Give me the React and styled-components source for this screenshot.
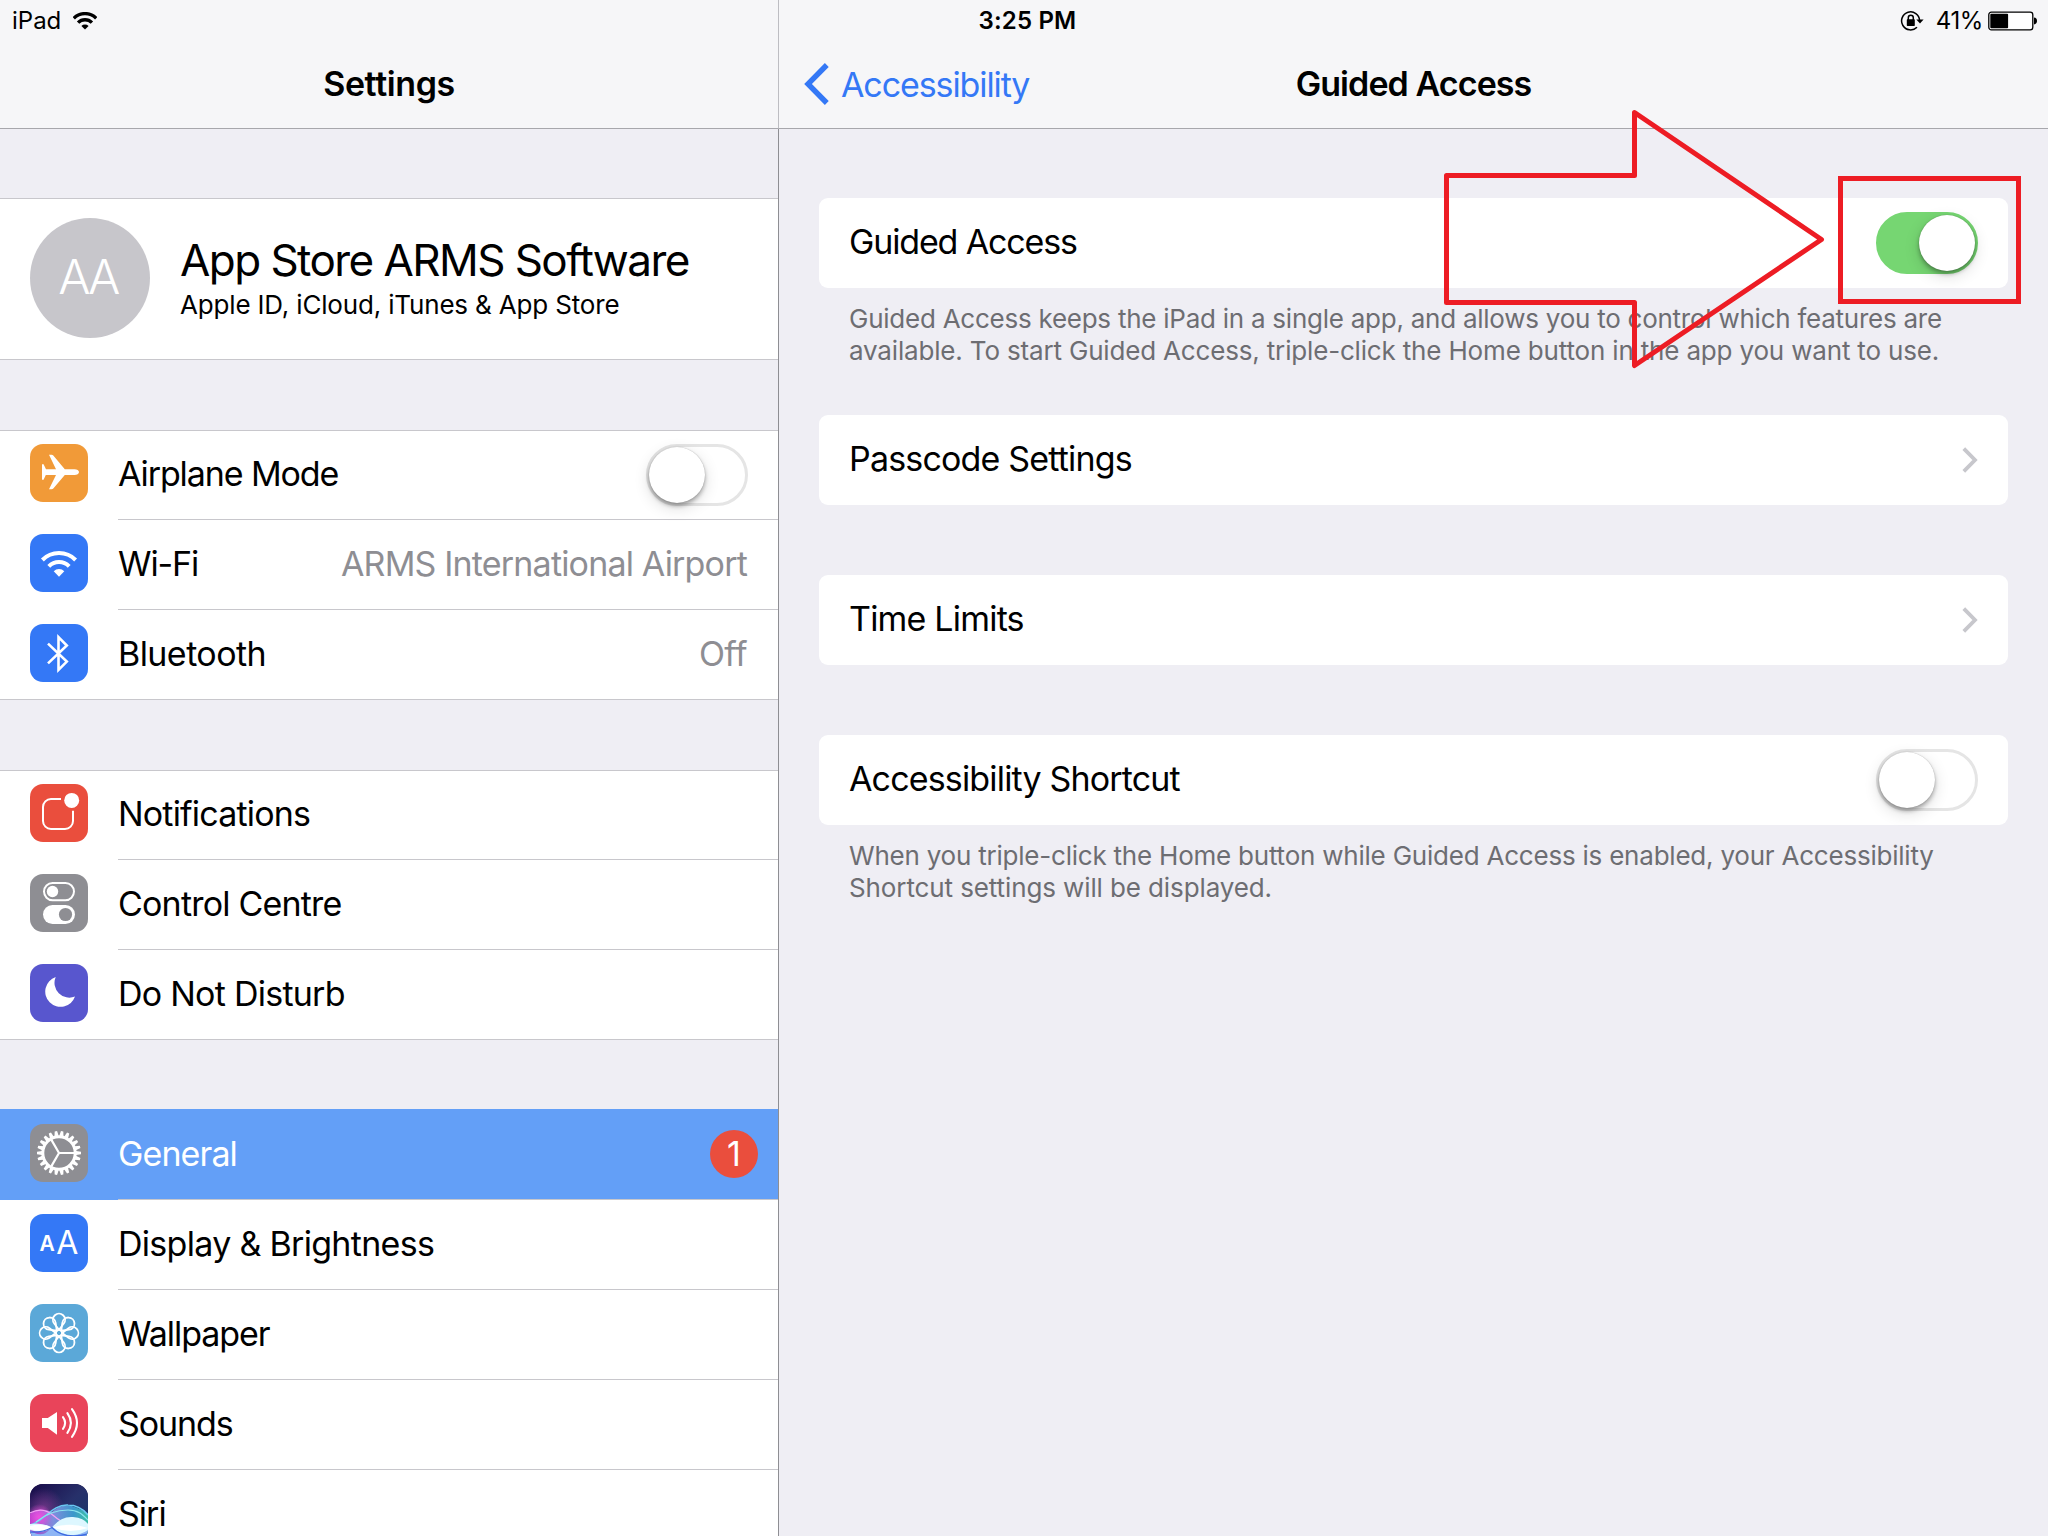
import React from 'react';
import styled, { createGlobalStyle } from 'styled-components';

const GlobalStyle = createGlobalStyle `
body {
margin: 0;
background: #EFEEF4;
font-family: Inter, "Liberation Sans", sans-serif;
color: #000;
}
`
const Screen = styled.div `
position: relative;
display: flex;
width: 2048px;
height: 1536px;
overflow: hidden;
background: #EFEEF4;
`
const StatusBar = styled.div `
position: absolute;
top: 0;
left: 0;
right: 0;
display: grid;
grid-template-columns: 1fr auto 1fr;
align-items: center;
height: 41px;
padding: 0 11px 0 12px;
font-size: 24px;
line-height: 41px;
`
const StatusLeft = styled.div `
display: flex;
align-items: center;
gap: 12px;
`
const Clock = styled.div `
margin-left: 6px;
font-weight: 600;
letter-spacing: 0.17px;
`
const StatusRight = styled.div `
display: flex;
align-items: center;
justify-content: flex-end;
`
const Percent = styled.span `
margin: 0 5px 0 12px;
letter-spacing: -0.4px;
`
const Sidebar = styled.div `
display: flex;
flex-direction: column;
flex-shrink: 0;
width: 778px;
border-right: 1px solid #8E8E93;
`
const Detail = styled.div `
flex: 1;
`
const NavBar = styled.div `
display: grid;
grid-template-columns: 1fr auto 1fr;
align-items: center;
flex-shrink: 0;
height: 88px;
padding-top: 40px;
background: #F6F6F8;
border-bottom: 1px solid #A7A7AC;
`
const SideNav = styled(NavBar) `
margin-right: -1px;
border-right: 1px solid #BDBDC2;
`
const Title = styled.div `
grid-column: 2;
padding-bottom: 1px;
font-size: 34px;
font-weight: 600;
letter-spacing: ${(p) => p.$track}px;
`
const Back = styled.div `
display: flex;
align-items: center;
gap: 12px;
padding-left: 25px;
font-size: 34px;
letter-spacing: -1.1px;
color: #3478F6;
`
const SideList = styled.div `
display: flex;
flex-direction: column;
gap: 70px;
padding-top: 69px;
`
const Group = styled.div `
flex-shrink: 0;
background: #FFF;
border-top: 1px solid #C8C7CC;
border-bottom: 1px solid #C8C7CC;
`
const Profile = styled(Group) `
display: flex;
gap: 30px;
height: 141px;
padding: 19px 30px 0;
`
const Avatar = styled.div `
width: 120px;
height: 120px;
border-radius: 50%;
background: #C7C6CB;
color: #FFF;
font-size: 48px;
font-weight: 300;
line-height: 118px;
text-align: center;
text-indent: -5px;
letter-spacing: -3.4px;
`
const ProfileName = styled.div `
margin-top: 17px;
font-size: 44px;
line-height: 50px;
letter-spacing: -1.56px;
`
const ProfileInfo = styled.div `
font-size: 26px;
line-height: 39px;
letter-spacing: -0.17px;
`
const Row = styled.div `
display: flex;
height: 90px;
padding-left: 30px;
color: ${(p) => (p.$selected ? '#FFF' : '#000')};
background: ${(p) => (p.$selected ? '#639FF7' : 'none')};
box-shadow: ${(p) => (p.$selected ? '0 -1px 0 #639FF7' : 'none')};

&:first-child {
margin-top: -1px;
}
&:last-child {
height: 89px;
}
`
const RowBody = styled.div `
display: flex;
justify-content: space-between;
flex: 1;
margin-left: 30px;
padding-right: ${(p) => (p.$badge ? 20 : 30)}px;
border-bottom: 1px solid #C8C7CC;
font-size: 34px;
line-height: 88px;

${Row}:last-child & {
border-bottom: 0;
}
`
const Label = styled.span `
letter-spacing: ${(p) => p.$track}px;
`
const Value = styled.span `
margin-right: 1px;
color: #8E8E93;
letter-spacing: ${(p) => p.$track}px;
`
const Tile = styled.svg `
width: 58px;
height: 58px;
margin-top: 14px;
border-radius: 13px;
background: ${(p) => p.$color};
`
const Badge = styled.div `
width: 48px;
height: 48px;
margin-top: 20px;
border-radius: 50%;
background: #EA4E3D;
line-height: 47px;
text-align: center;
`
const Track = styled.div `
box-sizing: border-box;
display: flex;
justify-content: ${(p) => (p.$on ? 'flex-end' : 'flex-start')};
width: 102px;
height: 62px;
margin-top: 14px;
border: 3px solid ${(p) => (p.$on ? '#76D672' : '#E5E5E5')};
border-radius: 31px;
background: ${(p) => (p.$on ? '#76D672' : '#FFF')};
`
const Knob = styled.div `
width: 56px;
height: 56px;
border-radius: 50%;
background: #FFF;
box-shadow: 0 5px 16px rgba(0, 0, 0, 0.14), 0 3px 4px rgba(0, 0, 0, 0.3), 0 0 1px rgba(0, 0, 0, 0.3);
`
const Cards = styled.div `
display: flex;
flex-direction: column;
padding: 69px 40px 0;
`
const Card = styled.div `
display: flex;
justify-content: space-between;
height: 90px;
margin-bottom: ${(p) => (p.$note ? 0 : 70)}px;
padding: 0 30px;
border-radius: 9px;
background: #FFF;
font-size: 34px;
line-height: 88px;
`
const Chevron = styled.svg `
width: 16px;
height: 26px;
margin-top: 32px;
`
const Footnote = styled.div `
padding: 15px 30px 48px;
font-size: 26px;
line-height: 32px;
color: #6D6D72;
white-space: nowrap;
`
const NoteLine = styled.div `
letter-spacing: ${(p) => p.$track}px;
`
const Marker = styled.svg `
position: absolute;
top: 100px;
left: 1430px;
width: 600px;
height: 280px;
`

const Switch = ({ on }) => <Track $on={on}><Knob /></Track>

const WifiMark = ({ weight = 4 }) => (
    <g fill="none" stroke="currentColor" strokeWidth={weight}>
        <path d="M12.4 26A23.4 23.4 0 0 1 45.6 26" />
        <path d="M18.8 32.4A14.3 14.3 0 0 1 39.2 32.4" />
        <path d="M29 42.7L23.7 37.2A7.5 7.5 0 0 1 34.3 37.2Z" fill="currentColor" stroke="none" />
    </g>
)

const teeth = Array.from({ length: 22 }, (_, i) => (i * 360) / 22);
const petals = [0, 45, 90, 135, 180, 225, 270, 315];

const icons = {
    airplane: ['#F19A38', (
        <path fill="#FFF" d="M49 28C49 29.8 47 31 44.5 31H34.8L23.3 44.6Q22.6 45.3 21.6 45.3H19L26 31H15.8L13.6 35.8H12V20.3H13.6L16 25.2H26L19 10.8H21.6Q22.6 10.8 23.3 11.6L34.8 25.2H44.5C47 25.2 49 26.3 49 28Z" />
    )],
    wifi: ['#3478F6', <WifiMark />],
    bluetooth: ['#3478F6', (
        <path fill="none" stroke="#FFF" strokeWidth="2.6" d="M18 19.6L36.8 37.6L28.5 45.8V13.2L36.8 21.5L18 39.4" />
    )],
    notifications: ['#EA4E3D', (
        <>
            <path fill="none" stroke="#FFF" strokeWidth="2" d="M31 15H21a8 8 0 0 0-8 8V37a8 8 0 0 0 8 8H35a8 8 0 0 0 8-8V26.8" />
            <circle cx="41.7" cy="16.4" r="7.5" fill="#FFF" />
        </>
    )],
    control: ['#8E8E93', (
        <>
            <rect x="14" y="9" width="30" height="17.2" rx="8.6" fill="none" stroke="#FFF" strokeWidth="2" />
            <circle cx="22.5" cy="17.5" r="5.7" fill="#FFF" />
            <rect x="13" y="31" width="32" height="19" rx="9.5" fill="#FFF" />
            <circle cx="35.5" cy="40.5" r="6.6" fill="#8E8E93" />
        </>
    )],
    moon: ['#5856CE', (
        <path fill="#FFF" d="M25.7 13A15.3 15.3 0 1 0 45 32.5A14.8 14.8 0 0 1 25.7 13Z" />
    )],
    gear: ['#8E8E93', (
        <g stroke="#FFF" fill="none">
            <circle cx="29" cy="29" r="16.2" strokeWidth="3" />
            {teeth.map((a) => (
                <path key={a} fill="#FFF" stroke="none" d="M46 26.9L51 27.8V30.2L46 31.1Z" transform={`rotate(${a} 29 29)`} />
            ))}
            <path strokeWidth="2.2" d="M29 29H45M29 29L21 15.1M29 29L21 42.9" />
        </g>
    )],
    display: ['#3478F6', (
        <g fill="#FFF" textAnchor="middle">
            <text x="17.2" y="37.3" fontSize="21" fontWeight="600">A</text>
            <text x="37.4" y="40" fontSize="32">A</text>
        </g>
    )],
    wallpaper: ['#5BA8D8', (
        <g stroke="#FFF" strokeWidth="1.8" fill="none">
            {petals.map((a) => (
                <path key={a} d="M29 25.8L24.2 19.5A6.1 6.1 0 1 1 33.8 19.5Z" transform={`rotate(${a} 29 29)`} />
            ))}
            <circle cx="29" cy="29" r="3.1" />
        </g>
    )],
    sounds: ['#E9445A', (
        <>
            <path fill="#FFF" d="M12 24H17.8L27 18V40.7L17.8 34H12Z" />
            <path fill="none" stroke="#FFF" strokeWidth="2.1" strokeLinecap="round" d="M33 23.2Q37.2 29 33 34.8M37.4 19.2Q44.4 29 37.4 38.8M42 15.2Q52 29 42 42.8" />
        </>
    )],
    siri: ['#1A1145', (
        <>
            <defs>
                <linearGradient id="night" x1="0" y1="0" x2="1" y2="1">
                    <stop offset="0" stopColor="#190A48" />
                    <stop offset="0.5" stopColor="#27306A" />
                    <stop offset="1" stopColor="#123A6B" />
                </linearGradient>
                <linearGradient id="wave" x1="0" y1="0" x2="1" y2="0">
                    <stop offset="0" stopColor="#C63BD8" />
                    <stop offset="0.4" stopColor="#8C9CF0" />
                    <stop offset="0.75" stopColor="#3FA9DC" />
                    <stop offset="1" stopColor="#43D8B0" />
                </linearGradient>
                <radialGradient id="pink">
                    <stop offset="0" stopColor="#F04FE0" />
                    <stop offset="1" stopColor="#F04FE0" stopOpacity="0" />
                </radialGradient>
                <radialGradient id="haze">
                    <stop offset="0" stopColor="#8A3C96" stopOpacity="0.7" />
                    <stop offset="1" stopColor="#8A3C96" stopOpacity="0" />
                </radialGradient>
            </defs>
            <rect width="58" height="58" fill="url(#night)" />
            <circle cx="14" cy="24" r="20" fill="url(#haze)" />
            <path d="M0 30Q10 22 22 28Q36 14 58 30V58H0Z" fill="url(#wave)" opacity="0.85" />
            <circle cx="9" cy="33" r="13" fill="url(#pink)" />
            <path d="M0 41C14 38 22 20 38 21C48 21 54 26 58 31" fill="none" stroke="#69C8F2" strokeWidth="1.5" />
            <path d="M0 29Q13 22 24 32T58 47" fill="none" stroke="#F3A3F5" strokeWidth="1.2" />
            <path d="M6 38C18 28 28 26 38 26S52 30 58 36" fill="none" stroke="#8BE4EE" strokeWidth="1.2" />
            <path d="M0 46Q12 56 22 43Q32 34 42 34Q52 34 58 40V58H0Z" fill="#8DB5F5" />
            <path d="M0 40Q12 38 22 43.5Q31 32 43 33Q54 34 58 40V46Q50 52 38 51Q28 50 22 43.5Q14 50 0 46Z" fill="#DDF7FF" />
            <path d="M0 42Q12 39 22 43.5Q12 49 0 45ZM22 43.5Q40 38 58 44Q40 50 22 43.5Z" fill="#FFF" />
            <path d="M0 48Q12 49 22 43.5Q34 56 58 50" fill="none" stroke="#3E6BE0" strokeWidth="1.4" />
        </>
    )],
};

const Icon = ({ name }) => (
    <Tile $color={icons[name][0]} viewBox="0 0 58 58" color="#FFF">{icons[name][1]}</Tile>
)

const Item = ({ icon, label, track = -0.9, selected, badge, children }) => (
    <Row $selected={selected}>
        <Icon name={icon} />
        <RowBody $badge={badge}>
            <Label $track={track}>{label}</Label>
            {children}
            {badge && <Badge>{badge}</Badge>}
        </RowBody>
    </Row>
)

const Disclosure = () => (
    <Chevron viewBox="0 0 16 26">
        <path d="M1.8 1.6L13 13L1.8 24.4" fill="none" stroke="#C7C7CC" strokeWidth="3.8" />
    </Chevron>
)

const App = () => {
    return (
        <Screen>
            <GlobalStyle />
            <Sidebar>
                <SideNav>
                    <Title $track={-0.4}>Settings</Title>
                </SideNav>
                <SideList>
                    <Profile>
                        <Avatar>AA</Avatar>
                        <div>
                            <ProfileName>App Store ARMS Software</ProfileName>
                            <ProfileInfo>Apple ID, iCloud, iTunes &amp; App Store</ProfileInfo>
                        </div>
                    </Profile>
                    <Group>
                        <Item icon="airplane" label="Airplane Mode" track={-1.1}><Switch /></Item>
                        <Item icon="wifi" label="Wi-Fi" track={-1.1}><Value $track={-0.82}>ARMS International Airport</Value></Item>
                        <Item icon="bluetooth" label="Bluetooth" track={-0.57}><Value $track={-0.6}>Off</Value></Item>
                    </Group>
                    <Group>
                        <Item icon="notifications" label="Notifications" track={-0.82} />
                        <Item icon="control" label="Control Centre" track={-0.8} />
                        <Item icon="moon" label="Do Not Disturb" track={-0.75} />
                    </Group>
                    <Group>
                        <Item icon="gear" label="General" selected badge="1" />
                        <Item icon="display" label="Display & Brightness" track={-0.7} />
                        <Item icon="wallpaper" label="Wallpaper" track={-1.05} />
                        <Item icon="sounds" label="Sounds" track={-1.1} />
                        <Item icon="siri" label="Siri" track={-1} />
                    </Group>
                </SideList>
            </Sidebar>
            <Detail>
                <NavBar>
                    <Back>
                        <svg width="25" height="42" viewBox="0 0 25 42">
                            <path d="M22.8 2L4 21L22.8 40" fill="none" stroke="#3478F6" strokeWidth="5.4" />
                        </svg>
                        Accessibility
                    </Back>
                    <Title $track={-0.91}>Guided Access</Title>
                </NavBar>
                <Cards>
                    <Card $note>
                        <Label $track={-1.15}>Guided Access</Label>
                        <Switch on />
                    </Card>
                    <Footnote>
                        <NoteLine $track={-0.25}>Guided Access keeps the iPad in a single app, and allows you to control which features are</NoteLine>
                        <NoteLine $track={-0.17}>available. To start Guided Access, triple-click the Home button in the app you want to use.</NoteLine>
                    </Footnote>
                    <Card>
                        <Label $track={-0.83}>Passcode Settings</Label>
                        <Disclosure />
                    </Card>
                    <Card>
                        <Label $track={-0.8}>Time Limits</Label>
                        <Disclosure />
                    </Card>
                    <Card $note>
                        <Label $track={-0.84}>Accessibility Shortcut</Label>
                        <Switch />
                    </Card>
                    <Footnote>
                        <NoteLine $track={-0.22}>When you triple-click the Home button while Guided Access is enabled, your Accessibility</NoteLine>
                        <NoteLine $track={-0.11}>Shortcut settings will be displayed.</NoteLine>
                    </Footnote>
                </Cards>
            </Detail>
            <StatusBar>
                <StatusLeft>
                    iPad
                    <svg width="24" height="18" viewBox="11.3 17 35.4 26">
                        <WifiMark weight={5} />
                    </svg>
                </StatusLeft>
                <Clock>3:25 PM</Clock>
                <StatusRight>
                    <svg width="24" height="22" viewBox="0 0 24 22">
                        <path d="M19.6 10.5A9 9 0 1 0 17 17.2" fill="none" stroke="#000" strokeWidth="1.5" />
                        <path d="M16.3 9.6H23.6L20 13.6Z" />
                        <rect x="6.8" y="9.3" width="8" height="6.6" rx="0.6" />
                        <path d="M8.3 10V7.8a2.5 2.5 0 0 1 5 0V10" fill="none" stroke="#000" strokeWidth="1.5" />
                    </svg>
                    <Percent>41%</Percent>
                    <svg width="49" height="20" viewBox="0 0 49 20">
                        <rect x="0.8" y="1.1" width="44" height="17.8" rx="2.6" fill="#FFF" stroke="#000" strokeWidth="1.3" />
                        <rect x="2.3" y="2.8" width="17.8" height="14.4" rx="1" />
                        <path d="M46 6.6Q49 7 49 10T46 13.4Z" />
                    </svg>
                </StatusRight>
            </StatusBar>
            <Marker viewBox="1430 100 600 280" fill="none" stroke="#ED1C24" strokeWidth="5">
                <path strokeLinejoin="round" d="M1446.5 175.5H1634.5V112.5L1821.5 239.5L1634.5 365.5V302.5H1446.5Z" />
                <rect x="1840.5" y="178.5" width="178" height="123" />
            </Marker>
        </Screen>
    )
}

export default App
